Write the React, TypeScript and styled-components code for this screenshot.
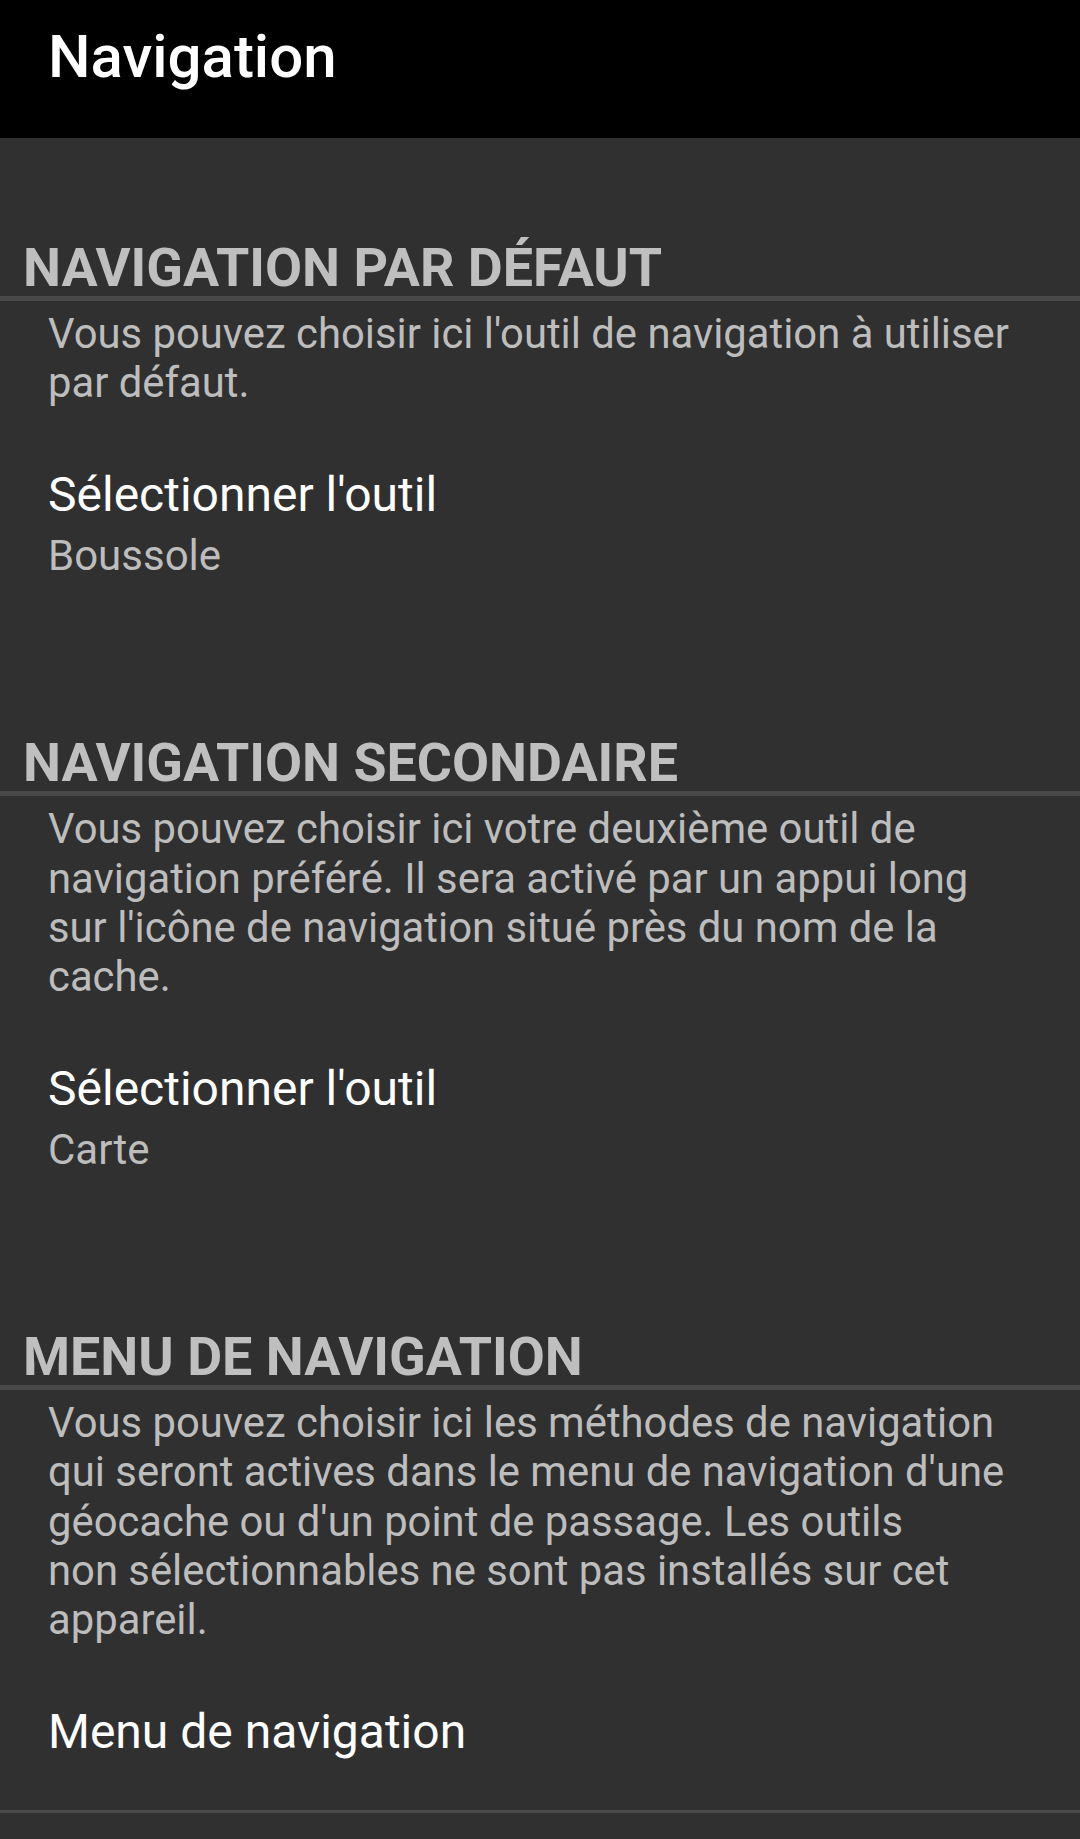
import React from 'react';
import styled, { createGlobalStyle } from 'styled-components';

// Types
type PrefItem = {
	title: string;
	summary?: string;
}

type Category = {
	title: string;
	description: string;
	item: PrefItem;
}

// Data
const categories: Category[] = [
	{
		title: 'NAVIGATION PAR DÉFAUT',
		description: "Vous pouvez choisir ici l'outil de navigation à utiliser par défaut.",
		item: { title: "Sélectionner l'outil", summary: 'Boussole' },
	},
	{
		title: 'NAVIGATION SECONDAIRE',
		description: "Vous pouvez choisir ici votre deuxième outil de navigation préféré. Il sera activé par un appui long sur l'icône de navigation situé près du nom de la cache.",
		item: { title: "Sélectionner l'outil", summary: 'Carte' },
	},
	{
		title: 'MENU DE NAVIGATION',
		description: "Vous pouvez choisir ici les méthodes de navigation qui seront actives dans le menu de navigation d'une géocache ou d'un point de passage. Les outils non\u00a0sélectionnables ne sont pas installés sur cet appareil.",
		item: { title: 'Menu de navigation' },
	},
];

/**
 * Navigation settings screen
 */
const App: React.FC = () => (
	<>
		<GlobalStyle />
		<Screen>
			<TopBar>
				<TopBarTitle>Navigation</TopBarTitle>
			</TopBar>
			<List>
				{ categories.map((cat) => (
					<Section key={ cat.title }>
						<CategoryTitle>{ cat.title }</CategoryTitle>
						<CategoryDivider />
						<Description>{ cat.description }</Description>
						<Preference $single={ !cat.item.summary }>
							<PrefTitle>{ cat.item.title }</PrefTitle>
							{ cat.item.summary && <PrefSummary>{ cat.item.summary }</PrefSummary> }
						</Preference>
					</Section>
				)) }
				<ListDivider />
			</List>
		</Screen>
	</>
);
export default App;

// Styles
const GlobalStyle = createGlobalStyle`
	html, body {
		margin: 0;
		padding: 0;
		background: #303030;
	}
	body {
		font-family: Roboto, 'Noto Sans', sans-serif;
	}
`;

const Screen = styled.div`
	min-height: 100vh;
	background: #303030;
	display: flex;
	flex-direction: column;
`;

const TopBar = styled.header`
	height: 138px;
	box-sizing: border-box;
	background: #000;
	padding: 22px 0 0 48px;
`;

const TopBarTitle = styled.h1`
	margin: 0;
	font-size: 60px;
	line-height: 70px;
	font-weight: 500;
	color: #fff;
`;

const List = styled.main`
	display: flex;
	flex-direction: column;
`;

const Section = styled.section`
	display: flex;
	flex-direction: column;
	padding-top: 102px;
`;

const CategoryTitle = styled.h2`
	margin: 0;
	padding-left: 23px;
	font-size: 53.8px;
	line-height: 56px;
	font-weight: 700;
	color: #bfbfbf;
`;

const CategoryDivider = styled.div`
	height: 5px;
	background: #494949;
`;

const Description = styled.p`
	margin: 0;
	padding: 8px 48px 0 48px;
	font-size: 41.8px;
	line-height: 49.2px;
	color: #bdbdbd;
`;

const Preference = styled.div<{ $single?: boolean }>`
	display: flex;
	flex-direction: column;
	gap: 8px;
	padding: 60px 48px ${ ({ $single }) => ($single ? '50px' : '53px') } 48px;
`;

const PrefTitle = styled.div`
	font-size: 48px;
	line-height: 56px;
	color: #fff;
`;

const PrefSummary = styled.div`
	font-size: 42px;
	line-height: 49px;
	color: #bdbdbd;
`;

const ListDivider = styled.div`
	height: 3px;
	background: #4b4b4b;
`;
